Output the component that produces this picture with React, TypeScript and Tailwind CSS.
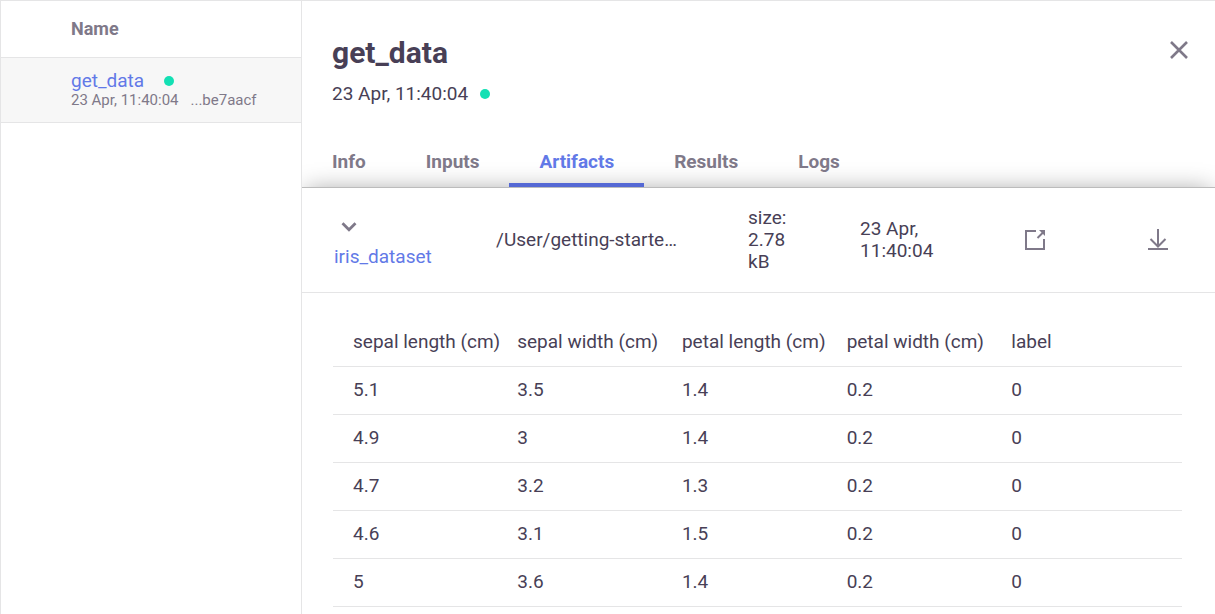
const columns = ['sepal length (cm)', 'sepal width (cm)', 'petal length (cm)', 'petal width (cm)', 'label'];

const rows = [
  ['5.1', '3.5', '1.4', '0.2', '0'],
  ['4.9', '3', '1.4', '0.2', '0'],
  ['4.7', '3.2', '1.3', '0.2', '0'],
  ['4.6', '3.1', '1.5', '0.2', '0'],
  ['5', '3.6', '1.4', '0.2', '0'],
];

const tabs = ['Info', 'Inputs', 'Artifacts', 'Results', 'Logs'];

function StatusDot() {
  return <span role="img" aria-label="completed" className="block size-[10px] shrink-0 rounded-full bg-[#13e0b4]" />;
}

function CloseIcon() {
  return (
    <svg width="18" height="18" viewBox="0 0 18 18" fill="none" stroke="#7f7989" strokeWidth="2.600" aria-hidden="true">
      <path d="M1 1l16 16M17 1L1 17" />
    </svg>
  );
}

function ChevronIcon() {
  return (
    <svg width="16" height="10" viewBox="0 0 16 10" fill="none" stroke="#7f7989" strokeWidth="2.8" aria-hidden="true">
      <path d="M1.5 1.2L8 7.7L14.5 1.2" />
    </svg>
  );
}

function PopOutIcon() {
  return (
    <svg width="22" height="22" viewBox="0 0 22 22" fill="none" stroke="#7f7989" strokeWidth="2" aria-hidden="true">
      <path d="M12 2H2v18h18V10" />
      <path d="M13.500 9l6-6" />
      <path d="M15 1h6v6l-2-2-2-2z" fill="#7f7989" stroke="none" />
    </svg>
  );
}

function DownloadIcon() {
  return (
    <svg width="20" height="22" viewBox="0 0 20 22" fill="none" stroke="#7f7989" strokeWidth="2" aria-hidden="true">
      <path d="M10 0v18M2.500 10L10 17.500L17.500 10M0 20h20" />
    </svg>
  );
}

export default function App() {
  return (
    <div className="flex min-h-screen border-t border-l border-[#e5e5e6] bg-white font-['Roboto',sans-serif] text-[19px] leading-[22px] text-[#483f56]">
      <aside className="w-[301px] shrink-0 border-r border-[#e5e5e6] text-[#7f7989]">
        <h2 className="border-b border-[#e5e5e6] py-[17px] pl-[70px] text-[18px] font-bold">Name</h2>
        <div className="border-b border-[#e5e5e6] bg-[#f7f7f7] pt-3 pb-[14px] pl-[70px]">
          <div className="flex items-center gap-5">
            <a href="#get_data" className="text-[#6279e7]">get_data</a>
            <StatusDot />
          </div>
          <div className="flex gap-3 text-[15px] leading-4">
            <span>23 Apr, 11:40:04</span>
            <span>...be7aacf</span>
          </div>
        </div>
      </aside>

      <main className="flex min-w-0 flex-1 flex-col overflow-hidden">
        <header className="flex items-start justify-between pt-9 pr-[27px] pl-[30px]">
          <div>
            <h1 className="text-[30px] leading-8 font-bold">get_data</h1>
            <div className="mt-[14px] flex items-center gap-3">
              <span>23 Apr, 11:40:04</span>
              <StatusDot />
            </div>
          </div>
          <button type="button" aria-label="Close" className="mt-1">
            <CloseIcon />
          </button>
        </header>

        <nav className="mt-[46px] flex font-bold text-[#7f7989]">
          {tabs.map((tab) => (
            <a
              key={tab}
              href={'#' + tab.toLowerCase()}
              aria-current={tab === 'Artifacts' ? 'page' : undefined}
              className={
                tab === 'Artifacts'
                  ? 'relative z-10 border-b-4 border-[#5468d4] px-[30px] pb-[10px] text-[#6279e7]'
                  : 'relative z-10 border-b-4 border-transparent px-[30px] pb-[10px]'
              }
            >
              {tab}
            </a>
          ))}
        </nav>

        <section className="flex-1 border-t border-[#bcbcbc] bg-white shadow-[0_0_24px_-4px_rgba(0,0,0,0.4)]">
          <div className="flex items-center border-b border-[#e5e5e6] py-[19px] pl-8">
            <div className="w-[18.4%] shrink-0 pt-[10px]">
              <button type="button" aria-label="Collapse preview" className="mb-[14px] ml-[7px] block">
                <ChevronIcon />
              </button>
              <a href="#iris_dataset" className="block text-[#6279e7]">iris_dataset</a>
            </div>
            <p className="w-[28.6%] shrink-0">/User/getting-starte…</p>
            <p className="w-[112px] shrink-0 pr-16">size: 2.78 kB</p>
            <p className="w-[164px] shrink-0 pr-16">23 Apr, 11:40:04</p>
            <button type="button" aria-label="Open preview" className="shrink-0">
              <PopOutIcon />
            </button>
            <button type="button" aria-label="Download" className="mr-[47px] ml-auto shrink-0">
              <DownloadIcon />
            </button>
          </div>

          <div className="pt-6 pr-[33px] pl-[31px]">
            <table className="w-full table-fixed text-left">
              <thead>
                <tr className="h-[49px] border-b border-[#e5e5e6]">
                  {columns.map((column) => (
                    <th
                      key={column}
                      scope="col"
                      className="w-[19.4%] pt-0.5 font-normal whitespace-nowrap first:w-[21.7%] first:pl-5 last:w-auto"
                    >
                      {column}
                    </th>
                  ))}
                </tr>
              </thead>
              <tbody>
                {rows.map((row) => (
                  <tr key={row[0]} className="h-12 border-b border-[#e5e5e6]">
                    {row.map((value, index) => (
                      <td key={columns[index]} className="first:pl-5">
                        {value}
                      </td>
                    ))}
                  </tr>
                ))}
              </tbody>
            </table>
          </div>
        </section>
      </main>
    </div>
  );
}
